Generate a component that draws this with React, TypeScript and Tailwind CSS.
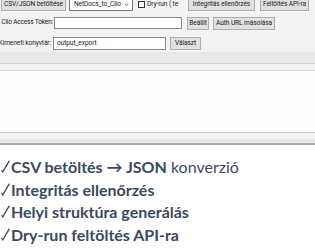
import React from 'react';

const steps = [
  { bold: 'CSV betöltés → JSON', rest: ' konverzió' },
  { bold: 'Integritás ellenőrzés', rest: '' },
  { bold: 'Helyi struktúra generálás', rest: '' },
  { bold: 'Dry-run feltöltés API-ra', rest: '' },
];

function Btn({ children, className = '' }: { children: React.ReactNode; className?: string }) {
  return (
    <button className={`h-[13px] shrink-0 border border-[#adadad] bg-[#e1e1e1] px-[1px] leading-none text-[#222] whitespace-nowrap ${className}`}>
      {children}
    </button>
  );
}

function Check() {
  return (
    <svg viewBox="0 0 10 14" className="w-[9px] h-[13px] shrink-0 text-[#3b4a5e]" fill="none" stroke="currentColor" strokeWidth="1.4" strokeLinecap="round">
      <path d="M1 11.5l1 1.5L9 1" />
    </svg>
  );
}

export default function App() {
  return (
    <div className="w-[315px] h-[250px] overflow-hidden bg-white font-['Roboto',sans-serif]">
      {/* toolbar */}
      <div className="bg-[#f3f3f3] h-[52px] flex flex-col text-[6.6px] tracking-[-0.1px] text-[#222]">
        <div className="flex items-center gap-[3px] pl-[1px] -mt-[2px] h-[13px]">
          <Btn className="w-[65px]">CSV/JSON betöltése</Btn>
          <div className="w-[64px] h-[13px] shrink-0 border border-[#7a7a7a] bg-white flex items-center justify-between pl-[4px] pr-[3px] whitespace-nowrap">
            <span>NetDocs_to_Clio</span>
            <svg viewBox="0 0 8 5" className="w-[5px] h-[3px]" fill="none" stroke="#333" strokeWidth="1.2">
              <path d="M1 1l3 3 3-3" />
            </svg>
          </div>
          <div className="ml-[2px] flex items-center gap-[2px] w-[46px] overflow-hidden whitespace-nowrap">
            <span className="w-[7px] h-[7px] shrink-0 border border-[#333] bg-white" />
            <span>Dry-run ( te</span>
          </div>
          <Btn className="w-[67px] ml-[1px]">Integritás ellenőrzés</Btn>
          <Btn className="w-[49px] ml-[2px]">Feltöltés API-ra</Btn>
        </div>

        <div className="flex items-center mt-[6px] h-[12px]">
          <div className="w-[54px] pr-[1px] flex justify-end overflow-hidden whitespace-nowrap tracking-[-0.2px]">Clio Access Token:</div>
          <div className="w-[128px] h-[12px] border border-[#8a8a8a] bg-white" />
          <Btn className="ml-[5px] w-[22px]">Beállít</Btn>
          <Btn className="ml-[4px] w-[62px]">Auth URL másolása</Btn>
        </div>

        <div className="flex items-center mt-[8px] h-[13px]">
          <div className="w-[51px] flex justify-end overflow-hidden whitespace-nowrap">Kimeneti konyvtár:</div>
          <div className="ml-[2px] w-[113px] h-[13px] border border-[#8a8a8a] bg-white flex items-center pl-[3px]">output_export</div>
          <Btn className="ml-[4px] w-[31px]">Választ</Btn>
        </div>
      </div>

      {/* log panel frame */}
      <div className="h-[12px] bg-[#e8e8e8] border-b border-[#d2d2d2]" />
      <div className="h-[7px] bg-[#f2f2f2] border-b border-[#d6d6d6]" />
      <div className="h-[62px] bg-[#fdfdfd] border-b border-[#c8c8c8]" />
      <div className="h-[6px] bg-[#f2f2f2]" />
      <div className="h-[6px] bg-[#e8e8e8] border-b-2 border-[#a8a8a8]" />

      {/* checklist */}
      <div className="flex flex-col gap-[3.5px] pt-[12px] pl-[1px] font-['Lato',sans-serif] text-[16px] leading-[19px] text-[#3b4a5e]">
        {steps.map((s) => (
          <div key={s.bold} className="flex items-center gap-[1px] whitespace-nowrap">
            <Check />
            <span>
              <span className="font-bold">{s.bold}</span>
              {s.rest && <span className="font-normal">{s.rest}</span>}
            </span>
          </div>
        ))}
      </div>
    </div>
  );
}
